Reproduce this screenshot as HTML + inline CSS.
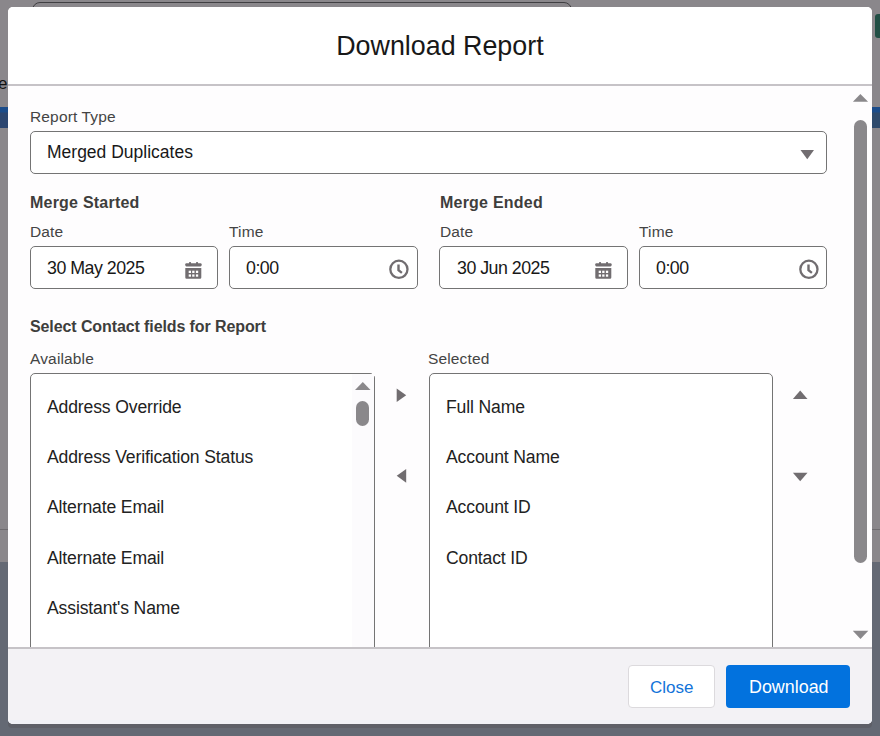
<!DOCTYPE html>
<html><head><meta charset="utf-8">
<style>
*{margin:0;padding:0;box-sizing:border-box}
html,body{width:880px;height:736px;overflow:hidden;font-family:"Liberation Sans",sans-serif}
body{position:relative;background:#8a878b}
.a{position:absolute}
.t{position:absolute;white-space:nowrap;line-height:1}
#bgbottom{left:0;top:562px;width:880px;height:174px;background:#646974}
#bgline{left:0;top:529px;width:880px;height:1px;background:#6f6c70}
#bginput{left:32px;top:2px;width:540px;height:30px;border:1.5px solid #403f42;border-radius:8px}
#bluel{left:0;top:107px;width:8px;height:21px;background:linear-gradient(#1b4c8a 0,#1b4c8a 5px,#2c4670 6px)}
#bluer{left:872px;top:107px;width:8px;height:21px;background:linear-gradient(#1b4c8a 0,#1b4c8a 5px,#2e4a6c 6px)}
#green{left:875px;top:14px;width:10px;height:24px;background:#214f45;border-radius:3px}
#modal{left:8px;top:7px;width:864px;height:717px;background:#fefdfe;border-radius:5px;overflow:hidden}
#hdr{left:0;top:0;width:864px;height:79px;background:#fff;border-bottom:2px solid #c6c3c7}
#ftr{left:0;top:640px;width:864px;height:77px;background:#f3f2f5;border-top:2px solid #c6c3c7}
.box{position:absolute;border:1px solid #747474;border-radius:5px;background:#fff}
.lbl{color:#444;font-size:15.5px;letter-spacing:0.15px}
.hd{color:#3e3e3c;font-size:16px;font-weight:700}
.val{color:#181818;font-size:17.8px;letter-spacing:-0.5px}
.item{color:#222;font-size:17.6px;letter-spacing:-0.15px}
.tri{position:absolute;width:0;height:0}
</style></head><body>
<div class="a" id="bgline"></div>
<div class="a" id="bgbottom"></div>
<div class="a" id="bginput"></div>
<div class="a" id="bluel"></div>
<div class="a" id="bluer"></div>
<div class="a" id="green"></div>
<div class="t" style="left:-2px;top:74.5px;font-size:17px;color:#111">e</div>

<div class="a" style="left:8px;top:722px;width:864px;height:6px;background:#5d5f68;border-radius:0 0 4px 4px"></div>
<div class="a" id="modal">
  <div class="a" id="hdr"></div>
  <div class="t" style="left:328.2px;top:25.5px;font-size:26.85px;color:#181818">Download Report</div>

  <!-- body -->
  <div class="t lbl" style="left:22px;top:102px">Report Type</div>
  <div class="box" style="left:22px;top:124px;width:797px;height:43px"></div>
  <div class="t val" style="left:39px;top:137px;font-size:17.5px;letter-spacing:0">Merged Duplicates</div>
  <svg class="a" style="left:790px;top:141px" width="18" height="14" viewBox="0 0 18 14"><path d="M2.5 2 H16 L9.25 11.2 Z" fill="#716d70"/></svg>

  <div class="t hd" style="left:22px;top:188px;letter-spacing:0.22px">Merge Started</div>
  <div class="t lbl" style="left:22px;top:217px">Date</div>
  <div class="t lbl" style="left:221px;top:217px">Time</div>
  <div class="box" style="left:22px;top:239px;width:188px;height:43px"></div>
  <div class="box" style="left:221px;top:239px;width:189px;height:43px"></div>
  <div class="t val" style="left:39px;top:252.5px">30 May 2025</div>
  <div class="t val" style="left:238px;top:252.5px">0:00</div>

  <div class="t hd" style="left:432px;top:188px;letter-spacing:0.22px">Merge Ended</div>
  <div class="t lbl" style="left:432px;top:217px">Date</div>
  <div class="t lbl" style="left:631px;top:217px">Time</div>
  <div class="box" style="left:431px;top:239px;width:189px;height:43px"></div>
  <div class="box" style="left:631px;top:239px;width:188px;height:43px"></div>
  <div class="t val" style="left:449px;top:252.5px">30 Jun 2025</div>
  <div class="t val" style="left:648px;top:252.5px">0:00</div>

  <div class="t hd" style="left:22px;top:312px;letter-spacing:-0.1px">Select Contact fields for Report</div>
  <div class="t lbl" style="left:22px;top:344px">Available</div>
  <div class="t lbl" style="left:420px;top:344px">Selected</div>
  <div class="box" style="left:22px;top:366px;width:345px;height:320px"></div>
  <div class="box" style="left:421px;top:366px;width:344px;height:320px"></div>

  <div class="t item" style="left:39px;top:392px">Address Override</div>
  <div class="t item" style="left:39px;top:442px">Address Verification Status</div>
  <div class="t item" style="left:39px;top:492px">Alternate Email</div>
  <div class="t item" style="left:39px;top:543px">Alternate Email</div>
  <div class="t item" style="left:39px;top:593px">Assistant's Name</div>

  <div class="t item" style="left:438px;top:392px">Full Name</div>
  <div class="t item" style="left:438px;top:442px">Account Name</div>
  <div class="t item" style="left:438px;top:492px">Account ID</div>
  <div class="t item" style="left:438px;top:543px">Contact ID</div>


  <!-- calendar icons -->
  <svg class="a" style="left:176px;top:253px" width="20" height="20" viewBox="0 0 20 20">
    <rect x="1.3" y="3.2" width="16.3" height="3.2" rx="1.1" fill="#716d70"/>
    <rect x="5" y="1.9" width="2.1" height="2.4" rx="0.8" fill="#716d70"/>
    <rect x="12" y="1.9" width="2.1" height="2.4" rx="0.8" fill="#716d70"/>
    <path d="M1.3 8 H17.3 V17.6 a1.2 1.2 0 0 1 -1.2 1.2 H2.5 a1.2 1.2 0 0 1 -1.2 -1.2 Z" fill="#716d70"/>
    <g fill="#fff"><rect x="4.7" y="10.7" width="2.3" height="2.3"/><rect x="8.2" y="10.7" width="2.3" height="2.3"/><rect x="11.9" y="10.7" width="2.3" height="2.3"/>
    <rect x="4.7" y="14.4" width="2.3" height="2.3"/><rect x="8.2" y="14.4" width="2.3" height="2.3"/><rect x="11.9" y="14.4" width="2.3" height="2.3"/></g>
  </svg>
  <svg class="a" style="left:586px;top:253px" width="20" height="20" viewBox="0 0 20 20">
    <rect x="1.3" y="3.2" width="16.3" height="3.2" rx="1.1" fill="#716d70"/>
    <rect x="5" y="1.9" width="2.1" height="2.4" rx="0.8" fill="#716d70"/>
    <rect x="12" y="1.9" width="2.1" height="2.4" rx="0.8" fill="#716d70"/>
    <path d="M1.3 8 H17.3 V17.6 a1.2 1.2 0 0 1 -1.2 1.2 H2.5 a1.2 1.2 0 0 1 -1.2 -1.2 Z" fill="#716d70"/>
    <g fill="#fff"><rect x="4.7" y="10.7" width="2.3" height="2.3"/><rect x="8.2" y="10.7" width="2.3" height="2.3"/><rect x="11.9" y="10.7" width="2.3" height="2.3"/>
    <rect x="4.7" y="14.4" width="2.3" height="2.3"/><rect x="8.2" y="14.4" width="2.3" height="2.3"/><rect x="11.9" y="14.4" width="2.3" height="2.3"/></g>
  </svg>
  <!-- clock icons -->
  <svg class="a" style="left:378px;top:250px" width="24" height="24" viewBox="0 0 24 24">
    <circle cx="12.9" cy="12.3" r="8.6" fill="none" stroke="#716d70" stroke-width="2.3"/>
    <path d="M12.5 7.6 V13.2 L15.9 15.9" fill="none" stroke="#716d70" stroke-width="2.4"/>
  </svg>
  <svg class="a" style="left:788px;top:250px" width="24" height="24" viewBox="0 0 24 24">
    <circle cx="12.9" cy="12.3" r="8.6" fill="none" stroke="#716d70" stroke-width="2.3"/>
    <path d="M12.5 7.6 V13.2 L15.9 15.9" fill="none" stroke="#716d70" stroke-width="2.4"/>
  </svg>
  <!-- listbox scrollbar -->
  <div class="a" style="left:344px;top:367px;width:22px;height:280px;background:#fcfbfd"></div>
  <svg class="a" style="left:344px;top:373px" width="22" height="12" viewBox="0 0 22 12"><path d="M3 10 L10.8 2 L18.5 10 Z" fill="#8a888b"/></svg>
  <div class="a" style="left:348px;top:394px;width:13px;height:25px;border-radius:6.5px;background:#8a888b"></div>
  <div class="a" style="left:364px;top:365px;width:4px;height:4px;background:#fefdfe"></div>
  <!-- transfer arrows -->
  <svg class="a" style="left:386px;top:380px" width="14" height="16" viewBox="0 0 14 16"><path d="M2.7 1.5 L12.2 8.3 L2.7 15 Z" fill="#716d70"/></svg>
  <svg class="a" style="left:386px;top:461px" width="14" height="16" viewBox="0 0 14 16"><path d="M12.2 1 L2.7 7.8 L12.2 14.7 Z" fill="#716d70"/></svg>
  <!-- order arrows -->
  <svg class="a" style="left:782px;top:381px" width="18" height="12" viewBox="0 0 18 12"><path d="M2.9 11 L10.2 2.4 L17.5 11 Z" fill="#716d70"/></svg>
  <svg class="a" style="left:782px;top:463.5px" width="18" height="12" viewBox="0 0 18 12"><path d="M2.9 1.8 L10.2 10.2 L17.5 1.8 Z" fill="#716d70"/></svg>
  <!-- main scrollbar -->
  <svg class="a" style="left:842px;top:84px" width="20" height="12" viewBox="0 0 20 12"><path d="M2.9 10.8 L10.4 3 L18.1 10.8 Z" fill="#8a888b"/></svg>
  <div class="a" style="left:846px;top:113px;width:13px;height:443px;border-radius:6.5px;background:#8a888b"></div>
  <svg class="a" style="left:842px;top:620px" width="20" height="14" viewBox="0 0 20 14"><path d="M2.8 3.7 L10.5 12 L18.3 3.7 Z" fill="#8a888b"/></svg>
  <!-- footer -->
  <div class="a" id="ftr"></div>
  <div class="a" style="left:0;top:713px;width:864px;height:4px;background:#eff0f6"></div>
  <div class="a" style="left:620px;top:658px;width:87px;height:43px;background:#fff;border:1px solid #dcdadd;border-radius:4px"></div>
  <div class="t" style="left:642px;top:672px;font-size:17px;color:#1273d9">Close</div>
  <div class="a" style="left:718px;top:658px;width:124px;height:43px;background:#0272de;border-radius:4px"></div>
  <div class="t" style="left:741px;top:671.5px;font-size:17.9px;color:#fff">Download</div>
</div>
</body></html>
